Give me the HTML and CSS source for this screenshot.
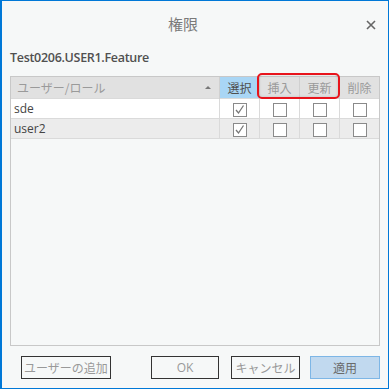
FILE: index.html
```html
<!DOCTYPE html>
<html lang="ja">
<head>
    <meta charset="UTF-8">
    <title>権限</title>
    <link rel="stylesheet" href="styles.css">
</head>
<body>
    <div class="window">
        <div class="titlebar">
            <span class="title">権限</span>
            <svg class="close" width="10" height="10" viewBox="0 0 10 10">
                <path d="M1 1 L9 9 M9 1 L1 9" stroke="#666" stroke-width="1.6"/>
            </svg>
        </div>
        <div class="subject">Test0206.USER1.Feature</div>
        <div class="grid">
            <table class="perm-table">
                <thead>
                    <tr>
                        <th class="col-user">ユーザー/ロール<span class="sort"></span></th>
                        <th class="col-check active">選択</th>
                        <th class="col-check">挿入</th>
                        <th class="col-check">更新</th>
                        <th class="col-check">削除</th>
                    </tr>
                </thead>
                <tbody>
                    <tr>
                        <td>sde</td>
                        <td class="cell-check"><span class="box checked"><svg width="11" height="11" viewBox="0 0 11 11"><path d="M2 6 L4.5 9 L9.5 1.5" fill="none" stroke="#777" stroke-width="1.3"/></svg></span></td>
                        <td class="cell-check"><span class="box"></span></td>
                        <td class="cell-check"><span class="box"></span></td>
                        <td class="cell-check"><span class="box"></span></td>
                    </tr>
                    <tr class="alt">
                        <td>user2</td>
                        <td class="cell-check"><span class="box checked"><svg width="11" height="11" viewBox="0 0 11 11"><path d="M2 6 L4.5 9 L9.5 1.5" fill="none" stroke="#777" stroke-width="1.3"/></svg></span></td>
                        <td class="cell-check"><span class="box"></span></td>
                        <td class="cell-check"><span class="box"></span></td>
                        <td class="cell-check"><span class="box"></span></td>
                    </tr>
                </tbody>
            </table>
            <div class="highlight"></div>
        </div>
        <div class="buttons">
            <button class="btn btn-add">ユーザーの追加</button>
            <div class="spacer"></div>
            <button class="btn btn-ok">OK</button>
            <button class="btn btn-cancel">キャンセル</button>
            <button class="btn btn-apply">適用</button>
        </div>
    </div>
</body>
</html>
```

FILE: styles.css
```css
body {
    margin: 0;
    padding: 0;
    background: #ffffff;
    font-family: "Open Sans", "Noto Sans CJK JP", sans-serif;
}
.window {
    width: 389px;
    height: 389px;
    box-sizing: border-box;
    border: 1px solid #0078d7;
    border-left-width: 2px;
    background: #f6f8f8;
    display: flex;
    flex-direction: column;
}
.titlebar {
    height: 44px;
    position: relative;
    display: flex;
    justify-content: center;
    align-items: center;
}
.title {
    font-family: "Noto Sans CJK JP", sans-serif;
    font-size: 15px;
    color: #7a7a7a;
    margin-right: 24px;
}
.close {
    position: absolute;
    right: 12px;
    top: 19px;
}
.subject {
    height: 20px;
    margin-top: 3px;
    padding-left: 8px;
    font-size: 12.5px;
    letter-spacing: -0.3px;
    font-weight: 600;
    color: #505050;
    line-height: 20px;
}
.grid {
    position: relative;
    margin: 8px 8px 0 8px;
    height: 270px;
    box-sizing: border-box;
    border: 1px solid #c8c8c8;
    background: #f6f8f8;
}
.perm-table {
    width: 100%;
    border-collapse: collapse;
    table-layout: fixed;
    font-size: 12px;
}
.perm-table th {
    height: 21px;
    padding: 0;
    background: #e1e1e1;
    color: #9a9a9a;
    font-family: "Noto Sans CJK JP", sans-serif;
    font-weight: normal;
    font-size: 12px;
    border-right: 1px solid #d0d0d0;
    text-align: center;
}
.perm-table th:last-child {
    border-right: none;
}
.perm-table th.col-user {
    text-align: left;
    padding-left: 6px;
    position: relative;
}
.perm-table th.col-check {
    width: 39px;
}
.perm-table th.active {
    background: #a9d6f5;
    color: #4f4f4f;
}
.sort {
    position: absolute;
    right: 8px;
    top: 9px;
    width: 0;
    height: 0;
    border-left: 3px solid transparent;
    border-right: 3px solid transparent;
    border-bottom: 3px solid #777;
}
.perm-table td {
    height: 19px;
    padding: 0;
    background: #ffffff;
    color: #444;
    border-top: 1px solid #dadada;
    border-right: 1px solid #dadada;
}
.perm-table td:first-child {
    padding-left: 3px;
}
.perm-table td:last-child {
    border-right: none;
}
.perm-table tr.alt td {
    background: #ececec;
}
.perm-table tr:last-child td {
    border-bottom: 1px solid #dadada;
}
.cell-check {
    text-align: center;
}
.box {
    display: inline-flex;
    align-items: center;
    justify-content: center;
    width: 12px;
    height: 12px;
    border: 1px solid #8a8a8a;
    background: #fff;
    vertical-align: middle;
}
.highlight {
    position: absolute;
    left: 246px;
    top: -4px;
    width: 79px;
    height: 22px;
    border: 2px solid #e8141c;
    border-radius: 5px;
    box-shadow: inset 0 0 3px rgba(0, 0, 0, 0.15);
}
.buttons {
    display: flex;
    margin-top: 10px;
    padding: 0 8px 0 19px;
}
.spacer {
    flex: 1;
}
.btn {
    height: 23px;
    box-sizing: border-box;
    background: #f6f8f8;
    border: 1px solid #333;
    color: #999;
    font-family: "Noto Sans CJK JP", sans-serif;
    font-size: 12px;
    padding: 0;
}
.btn-add {
    width: 90px;
}
.btn-ok {
    width: 68px;
    margin-right: 12px;
    font-family: "Open Sans", sans-serif;
}
.btn-cancel {
    width: 69px;
    margin-right: 10px;
}
.btn-apply {
    width: 70px;
    background: #c1d9ef;
    border-color: #7db6e6;
    color: #6a6a6a;
}
```
